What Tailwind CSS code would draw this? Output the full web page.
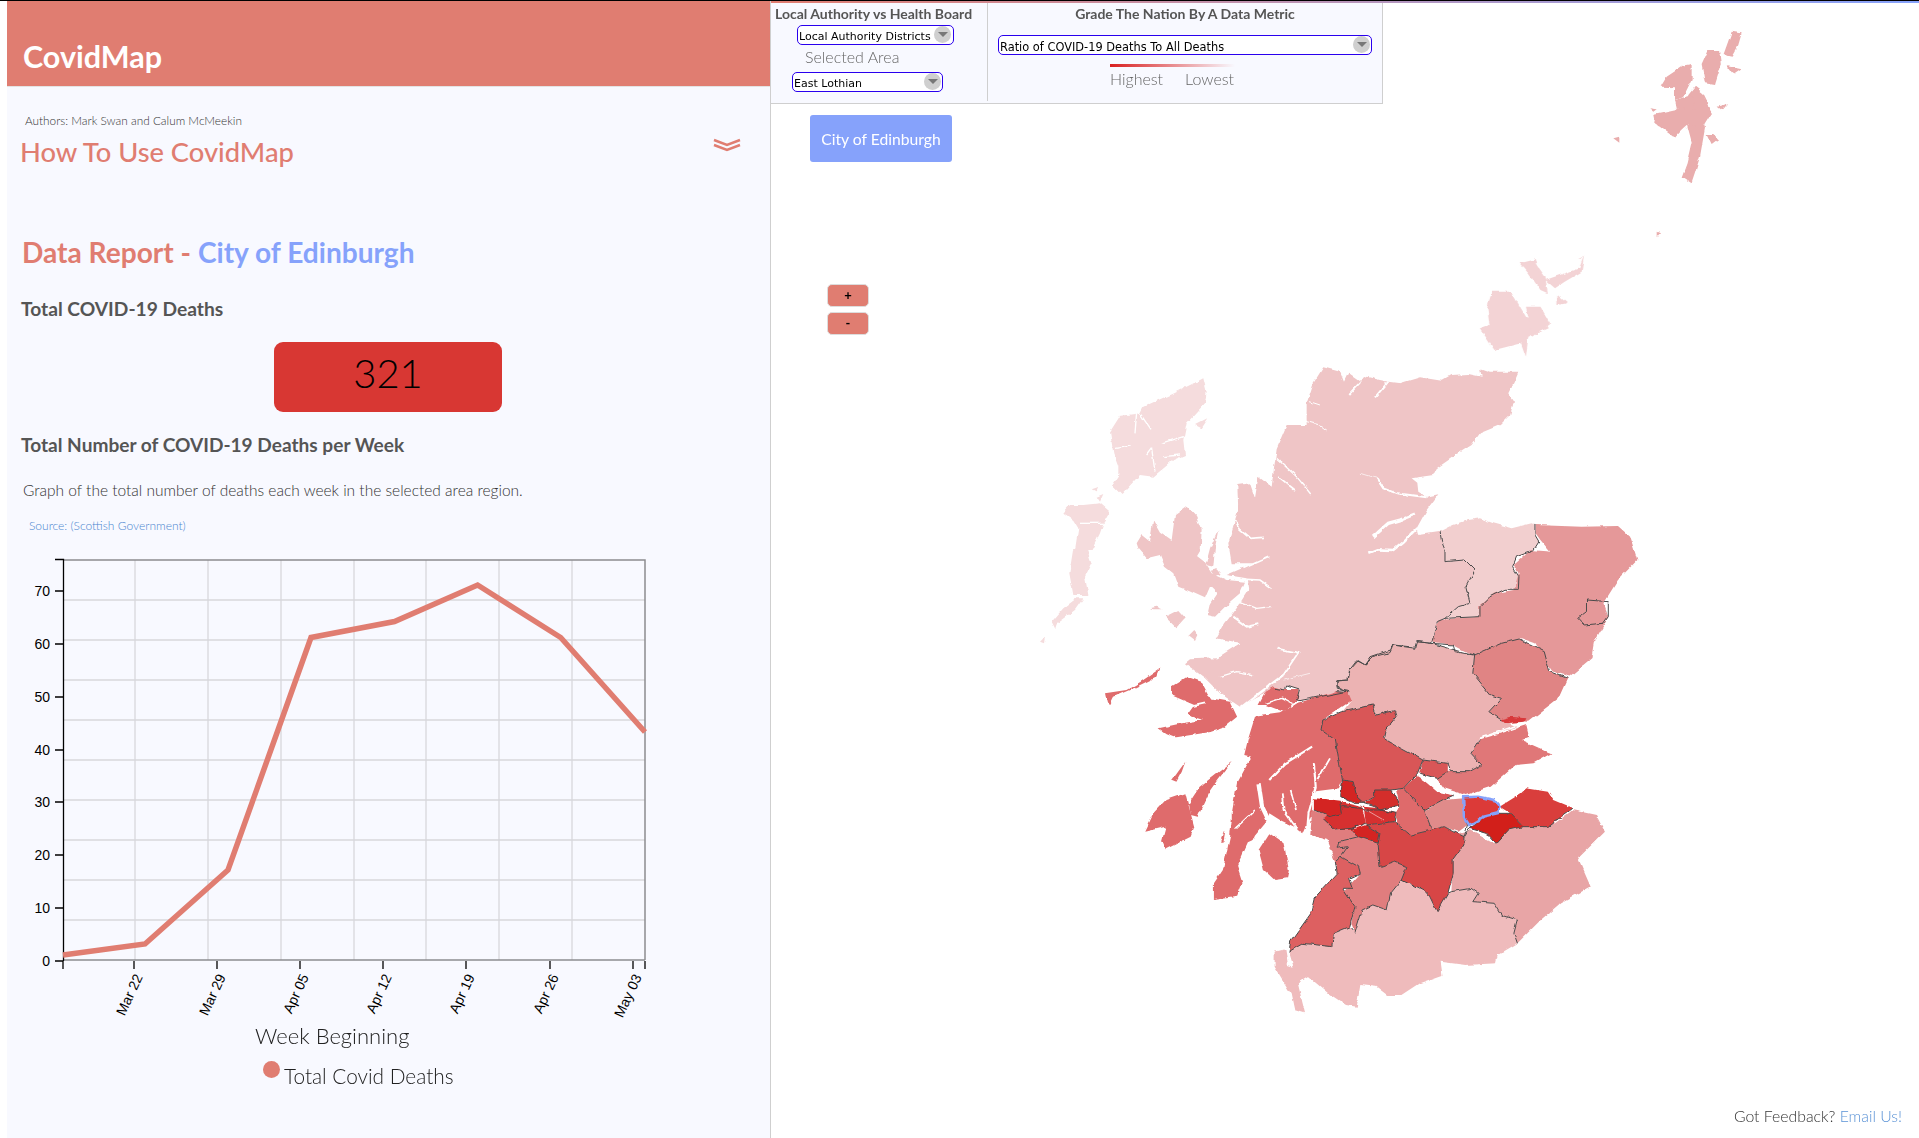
<!DOCTYPE html>
<html lang="en">
<head>
    <meta charset="UTF-8">
    <meta name="viewport" content="width=device-width, initial-scale=1.0">
    <title>CovidMap</title>
    <script src="https://cdn.jsdelivr.net/npm/@tailwindcss/browser@4"></script>
</head>
<body class="relative w-[1919px] h-[1138px] overflow-hidden bg-white font-[Lato,sans-serif]">
    <!-- Map canvas: traced regions, each group is in the coords of a crop -->
    <svg class="absolute inset-0 z-0" width="1919" height="1138" viewBox="0 0 1919 1138">
        <defs>
            <filter id="rough" filterUnits="userSpaceOnUse" x="0" y="0" width="1919" height="1138" color-interpolation-filters="sRGB">
                <feTurbulence type="fractalNoise" baseFrequency="0.11" numOctaves="3" seed="4" result="n"/>
                <feDisplacementMap in="SourceGraphic" in2="n" scale="4" xChannelSelector="R" yChannelSelector="G"/>
            </filter>
        </defs>
        <g filter="url(#rough)">
            <!-- Shetland -->
            <g transform="translate(1560 0) scale(.3333)" fill="#e9adad">
                <polygon points="515,95 545,100 535,135 515,170 490,165"/>
                <polygon points="445,150 480,150 485,190 465,255 435,250 425,195"/>
                <polygon points="500,195 545,205 520,222"/>
                <polygon points="405,260 430,280 440,300 455,340 430,365 435,385 420,470 405,520 395,550 365,530 380,490 395,425 380,370 345,410 280,365 285,345 340,340 370,350 375,320 385,285"/>
                <polygon points="280,345 350,330 380,300 440,300 455,340 430,380 380,375 340,410 285,370"/>
                <polygon points="320,230 365,200 395,195 395,240 370,290 345,300 345,262 302,260"/>
                <polygon points="345,300 395,285 405,330 350,325"/>
                <polygon points="470,320 505,310 485,332"/>
                <polygon points="268,325 290,328 280,335"/>
                <polygon points="160,415 178,410 178,428"/>
                <polygon points="440,405 460,405 475,420 455,435"/>
                <polygon points="290,695 300,700 290,712"/>
                <polygon points="55,778 70,768 62,780" fill="#f5dcdd"/>
            </g>
            <!-- Orkney -->
            <g transform="translate(1000 240) scale(.4847 .3333)" fill="#f3d3d5">
                <polygon points="1015,155 1055,155 1085,230 1125,250 1130,265 1090,290 1085,350 1075,310 1020,330 990,265 1010,255 1005,200"/>
                <polygon points="1085,200 1115,200 1135,250 1100,290"/>
                <polygon points="1072,70 1100,60 1125,110 1130,160 1115,150 1090,100"/>
                <polygon points="1125,120 1165,100 1195,85 1205,45 1200,95 1165,125 1145,145"/>
                <polygon points="1150,165 1170,190 1150,195"/>
                <polygon points="1105,50 1108,70 1100,70"/>
            </g>
            <!-- Western Isles -->
            <g transform="translate(1040 360) scale(.3333)" fill="#f5dcdd">
                <polygon points="490,55 500,95 495,130 440,190 430,240 435,285 400,300 340,350 300,345 285,360 245,405 215,375 235,345 235,320 220,280 210,215 240,168 300,160 310,140 400,100 470,65"/>
                <polygon points="465,195 505,175 485,205"/>
                <polygon points="70,458 90,435 130,435 180,430 210,455 190,490 180,520 155,570 105,570 115,505 100,480"/>
                <polygon points="100,565 140,565 155,610 135,650 145,705 100,705 88,640"/>
                <polygon points="35,785 70,745 110,715 130,715 105,750 50,790 45,805"/>
                <polygon points="0,845 15,830 12,850"/>
                <polygon points="155,385 175,378 170,392"/>
                <polygon points="170,410 190,402 180,425"/>
                <g fill="none" stroke="#fff" stroke-width="4">
                    <polyline points="320,285 335,265 345,335"/>
                    <polyline points="290,155 285,220"/>
                    <polyline points="300,160 330,205"/>
                    <polyline points="225,265 275,258"/>
                    <polyline points="365,250 430,230"/>
                    <polyline points="370,290 420,285"/>
                    <polyline points="120,490 190,490"/>
                </g>
            </g>
            <!-- Highland -->
            <g transform="translate(1140 360) scale(.3333)" fill="#efc5c6">
                <polygon points="550,22 600,35 612,65 625,38 660,62 680,50 720,60 745,65 780,70 840,52 905,62 935,45 985,42 1025,50 1020,25 1050,35 1135,35 1120,70 1105,100 1122,125 1110,165 1080,195 1020,220 995,255 940,290 890,325 880,345 835,352 815,355 832,368 835,395 860,410 895,403 860,450 830,505 835,525 900,515 905,545 915,570 915,605 975,600 1005,630 978,680 990,730 955,740 915,775 892,785 875,850 830,845 825,862 760,855 750,878 700,890 675,915 655,902 630,930 625,960 590,963 592,985 630,992 515,1015 480,1022 470,1020 478,990 440,978 435,990 405,985 300,1040 240,1000 195,955 135,910 150,898 230,895 245,885 300,850 230,835 255,790 290,745 325,690 320,655 260,645 340,610 275,610 265,550 285,480 295,450 292,375 330,370 345,415 355,350 395,380 410,265 440,195 500,195 500,130 520,70"/>
                <g fill="none" stroke="#fff">
                    <polyline stroke-width="5" points="285,480 300,510 330,535 372,532"/>
                    <polyline stroke-width="4" points="410,295 470,350 512,402"/>
                    <polyline stroke-width="5" points="415,350 465,390"/>
                    <polyline stroke-width="3" points="500,185 540,195 562,212"/>
                    <polyline stroke-width="3" points="510,125 540,135"/>
                    <polyline stroke-width="6" points="625,105 660,68"/>
                    <polyline stroke-width="6" points="705,112 745,65"/>
                    <polyline stroke-width="2" points="660,340 710,355"/>
                    <polyline stroke-width="6" points="710,355 730,385 770,400 810,405 860,412"/>
                    <polyline stroke-width="10" points="700,530 745,490 780,480 825,462"/>
                    <polyline stroke-width="8" points="685,578 710,568 760,570 790,545 830,505"/>
                    <polyline stroke-width="5" points="410,866 475,878 430,945"/>
                    <polyline stroke-width="8" points="430,945 300,1045"/>
                    <polyline stroke-width="2" points="510,940 430,960"/>
                    <polyline stroke-width="4" points="340,945 290,935 240,950"/>
                    <polyline stroke-width="4" points="300,725 350,745 395,740"/>
                    <polyline stroke-width="6" points="280,770 320,800 355,793"/>
                    <polyline stroke-width="5" points="320,658 360,660 395,685"/>
                    <polyline stroke-width="6" points="310,625 385,592"/>
                    <polyline stroke-width="3" points="240,845 300,850"/>
                </g>
                <!-- Moray -->
                <polygon fill="#f2cfcf" points="900,515 940,495 985,480 1020,475 1060,490 1115,505 1175,490 1185,495 1185,525 1197,545 1180,572 1130,590 1118,620 1137,650 1135,688 1095,688 1050,710 1020,740 1020,770 940,780 915,775 955,740 990,730 978,680 1005,630 975,600 915,605 915,570 905,545"/>
            </g>
            <!-- Skye and the small isles -->
            <g transform="translate(1040 360) scale(.3333)" fill="#efc5c6">
                <polygon points="290,550 305,525 330,545 340,480 360,515 395,540 405,465 440,440 468,470 485,510 482,570 470,590 495,610 515,640 560,660 615,665 600,700 570,725 525,770 502,765 510,730 530,700 510,680 495,715 440,690 415,680 400,640 375,620 360,585 320,595 295,565"/>
                <polygon points="497,615 510,565 535,510 525,560 520,620"/>
                <polygon points="512,632 530,628 542,642 525,650"/>
                <polygon points="375,770 415,750 437,775 410,805"/>
                <polygon points="445,825 460,810 472,825 465,840"/>
                <polygon points="330,745 350,740 368,748 340,748"/>
            </g>
            <!-- Aberdeenshire -->
            <g transform="translate(1000 240) scale(.4847 .3333)">
                <polygon fill="#e59899" points="1105,855 1200,860 1275,858 1300,890 1315,960 1275,1020 1245,1090 1255,1130 1245,1160 1225,1210 1220,1255 1175,1310 1140,1295 1125,1265 1105,1210 1075,1195 1035,1215 1025,1235 975,1245 935,1215 890,1205 905,1140 990,1130 985,1100 1020,1060 1060,1050 1070,1000 1060,975 1095,930 1135,935 1115,900 1105,880"/>
            </g>
            <!-- Central belt and the south -->
            <g transform="translate(1080 640) scale(.3571 .3333)">
                <!-- Islands and coast of Argyll -->
                <g fill="#df6b6c">
                    <polygon points="608,190 720,152 758,155 762,180 680,240 675,270 715,300 735,420 725,445 650,455 650,520 625,580 600,560 560,540 530,520 525,550 490,600 470,610 440,680 455,730 440,770 375,780 375,730 400,690 420,590 425,540 425,520 440,430 480,350 460,345 470,300 490,230 560,220"/>
                    <polygon points="520,155 545,140 575,150 612,150 610,180 570,215 520,195 500,195"/>
                    <polygon points="255,140 300,110 340,125 365,175 420,185 440,230 400,265 370,275 270,292 240,280 220,265 285,250 345,240 300,225 320,195 255,165"/>
                    <polygon points="70,160 130,150 170,125 225,85 215,110 150,145 95,170 85,192 75,185"/>
                    <polygon points="258,420 295,365 285,395 270,425"/>
                    <polygon points="180,575 205,520 240,480 295,460 320,560 310,590 240,628 230,600 240,560"/>
                    <polygon points="305,490 335,440 425,365 385,420 365,450 330,530 310,525"/>
                    <polygon points="500,630 530,580 570,610 585,690 580,715 545,720 515,690"/>
                    <polygon points="395,605 408,570 402,605"/>
                </g>
                <g fill="none" stroke="#fff">
                    <polyline stroke-width="6" points="650,320 575,370 530,420"/>
                    <polyline stroke-width="12" points="500,430 510,500 530,545 495,590 475,640"/>
                    <polyline stroke-width="6" points="655,370 660,440 640,520 635,585"/>
                    <polyline stroke-width="5" points="700,355 665,420"/>
                    <polyline stroke-width="5" points="565,460 570,510 610,570"/>
                    <polyline stroke-width="5" points="590,450 605,510"/>
                    <polyline stroke-width="5" points="490,510 435,565"/>
                    <polyline stroke-width="5" points="260,190 310,200 350,190"/>
                    <polyline stroke-width="4" points="520,190 565,175 600,195"/>
                </g>
                <polygon fill="#e8a5a6" points="1040,755 1095,745 1115,760 1100,785 1160,790 1180,825 1225,840 1215,880 1225,910 1290,840 1345,790 1430,740 1395,655 1470,575 1445,525 1380,510 1330,550 1240,560 1200,570 1160,610 1090,570 1060,580 1075,615 1045,660"/>
                <polygon fill="#efbbbc" points="585,935 625,910 705,920 710,880 755,860 770,880 790,810 820,795 860,810 870,760 900,720 975,760 1000,815 1030,760 1040,755 1095,745 1115,760 1100,785 1160,790 1180,825 1225,840 1215,880 1225,910 1170,945 1165,970 1080,975 1010,965 1015,1005 950,1030 900,1065 860,1065 830,1040 785,1035 775,1100 745,1095 695,1060 640,1010 610,1030 630,1120 600,1110 590,1060 545,980 545,935 575,928 582,975 598,980 585,935"/>
                <polygon fill="#ecb3b3" points="750,155 720,140 720,122 750,120 755,90 775,62 800,75 815,50 870,30 875,15 940,25 945,5 985,10 1050,30 1105,45 1100,100 1150,165 1180,175 1145,215 1180,240 1225,260 1120,295 1095,340 1125,375 1090,395 1040,395 1030,370 960,360 890,320 850,295 855,270 885,230 880,212 830,225 820,195 735,215 760,180"/>
                <polygon fill="#e08484" points="1105,45 1180,10 1230,-3 1300,35 1315,95 1365,115 1340,175 1255,245 1180,240 1145,215 1180,175 1150,165 1100,100"/>
                <polygon fill="#d8393b" points="1178,238 1205,230 1250,235 1245,245 1190,250"/>
                <polygon fill="#e07778" points="1120,298 1180,280 1250,255 1258,290 1235,300 1320,340 1270,370 1220,375 1150,440 1080,465 1020,445 1000,415 1030,395 1090,395 1125,375 1095,340"/>
                <polygon fill="#d95657" points="680,240 735,215 820,195 830,225 880,212 885,230 855,270 850,295 890,320 960,360 945,400 905,445 870,450 825,450 825,470 795,490 770,470 765,425 735,420 715,300 675,270"/>
                <polygon fill="#d95657" points="960,360 1030,370 1030,395 1000,415 950,400"/>
                <polygon fill="#d95657" points="905,445 945,405 1000,455 1050,465 1020,480 965,512 930,475"/>
                <polygon fill="#df6a6b" points="885,450 905,445 930,475 965,512 985,570 925,585 885,550 885,520 895,495"/>
                <polygon fill="#e08b8a" points="965,515 1020,480 1075,475 1075,515 1085,555 1060,575 1020,560 985,570"/>
                <polygon fill="#e07d7e" points="645,585 650,510 700,530 720,570 760,570 780,590 725,605 720,625 750,620 730,650 715,665 690,600"/>
                <polygon fill="#e07d7e" points="730,650 750,620 720,625 725,605 780,590 835,610 840,680 880,665 915,680 900,720 870,760 860,810 820,795 790,810 770,880 760,850 770,800 735,760 785,700 780,680"/>
                <polygon fill="#dd6061" points="715,665 730,650 780,680 785,700 755,715 765,745 735,745 770,800 755,860 710,880 705,920 625,910 585,935 590,905 650,815 660,770 720,700"/>
                <polygon fill="#d74646" points="800,555 880,545 925,585 1020,560 1075,590 1075,615 1045,660 1045,700 1030,760 1000,815 975,760 900,720 915,680 880,665 840,680 835,610 840,580"/>
                <polygon fill="#d42e2b" points="825,450 870,450 890,480 895,495 840,510 825,500 800,490 825,470"/>
                <polygon fill="#d42422" points="735,420 765,425 775,470 795,490 770,490 730,470"/>
                <polygon fill="#d63030" points="795,500 840,505 885,520 880,545 840,550 800,555"/>
                <polygon fill="#d63030" points="730,485 790,500 800,550 760,570 715,570 680,535"/>
                <polygon fill="#d42422" points="655,475 730,480 735,520 700,530 655,510"/>
                <polygon fill="#d42422" points="760,570 800,555 840,580 835,610 780,590"/>
                <polygon fill="#d21f1a" points="1090,565 1130,530 1170,520 1205,520 1240,560 1200,570 1165,610 1140,580"/>
                <polygon fill="#d93e3c" points="1175,500 1235,460 1250,445 1310,455 1325,480 1380,505 1335,540 1310,560 1240,560 1205,520"/>
                <polygon fill="#dc3a38" points="1073,472 1115,470 1160,480 1175,500 1170,520 1130,530 1090,555 1075,530"/>
                <polyline fill="none" stroke="#fff" stroke-width="7" points="945,405 990,435 1020,455 1075,470"/>
                <polyline fill="none" stroke="#fff" stroke-width="5" points="1120,295 1160,280 1240,250"/>
                <polyline fill="none" stroke="#fff" stroke-width="5" points="655,470 730,480 770,490"/>
                <polyline fill="none" stroke="#fff" stroke-width="1.5" points="770,490 850,540"/>
                <!-- Boundaries -->
                <g fill="none" stroke="#4a4a4a" stroke-width="1">
                    <polyline vector-effect="non-scaling-stroke" points="720,152 750,155 720,140 720,122 750,120 755,90 775,62 800,75 815,50 870,30 875,15 940,25 945,5 985,10 1050,30 1105,45 1180,10 1230,-3 1300,35 1315,95 1365,115"/>
                    <polyline vector-effect="non-scaling-stroke" points="1105,45 1100,100 1150,165 1180,175 1145,215 1180,240"/>
                    <polyline vector-effect="non-scaling-stroke" points="1120,298 1095,340 1125,375 1090,395 1040,395 1030,370 960,360 890,320 850,295 855,270 885,230 880,212 830,225 820,195 735,215 680,240 675,270 715,300 735,420 765,425 775,470 795,490 770,490 730,470 735,420"/>
                    <polyline vector-effect="non-scaling-stroke" points="960,360 945,400 905,445 870,450 825,450 825,470 795,490 825,500 840,510 895,495 890,480 870,450"/>
                    <polyline vector-effect="non-scaling-stroke" points="1030,395 1000,415 950,400"/>
                    <polyline vector-effect="non-scaling-stroke" points="905,445 930,475 965,512 1020,480 1050,465"/>
                    <polyline vector-effect="non-scaling-stroke" points="965,512 985,570 1020,560 1075,590 1085,555 1075,515"/>
                    <polyline vector-effect="non-scaling-stroke" points="655,510 700,530 735,520 730,485"/>
                    <polyline vector-effect="non-scaling-stroke" points="735,500 790,505 795,510 840,510 885,520 880,545 925,585 985,570"/>
                    <polyline vector-effect="non-scaling-stroke" points="800,550 760,565 715,570 680,535"/>
                    <polyline vector-effect="non-scaling-stroke" points="800,555 880,545"/>
                    <polyline vector-effect="non-scaling-stroke" points="760,570 780,590 835,610 840,580 800,555"/>
                    <polyline vector-effect="non-scaling-stroke" points="780,590 725,605 720,625 750,620 730,650 715,665 720,700 660,770 650,815 590,905 585,935 625,910 705,920 710,880 755,860 770,880 790,810 820,795 860,810 870,760 900,720 975,760 1000,815 1030,760 1040,755 1095,745 1115,760 1100,785 1160,790 1180,825 1225,840 1215,880 1225,910"/>
                    <polyline vector-effect="non-scaling-stroke" points="730,650 780,680 785,700 755,715 765,745 735,745 770,800 755,860"/>
                    <polyline vector-effect="non-scaling-stroke" points="835,610 840,680 880,665 915,680 900,720"/>
                    <polyline vector-effect="non-scaling-stroke" points="1075,590 1075,615 1045,660 1045,700 1030,760"/>
                    <polyline vector-effect="non-scaling-stroke" points="1075,590 1090,565 1140,580 1165,610 1200,570 1240,560"/>
                    <polyline vector-effect="non-scaling-stroke" points="1090,565 1130,530 1170,520 1205,520 1240,560 1310,560 1335,540 1380,505"/>
                </g>
                <polygon fill="none" stroke="#86a2fb" stroke-width="2.5" vector-effect="non-scaling-stroke" points="1073,472 1115,470 1160,480 1175,500 1170,520 1130,530 1090,555 1075,530"/>
            </g>
            <!-- Highland and Aberdeenshire boundaries -->
            <g transform="translate(1140 360) scale(.3333)" fill="none" stroke="#4a4a4a" stroke-width="1">
                <polyline vector-effect="non-scaling-stroke" points="900,515 905,545 915,570 915,605 975,600 1005,630 978,680 990,730 955,740 915,775 892,785 875,850 830,845 825,862 760,855 750,878 700,890 675,915 655,902 630,930 625,960 590,963 592,985 630,992 515,1015 480,1022 470,1020 478,990 440,978 435,990 405,985"/>
                <polyline vector-effect="non-scaling-stroke" points="875,850 940,855 945,875 1000,885"/>
                <polyline vector-effect="non-scaling-stroke" points="915,775 1020,770 1020,740 1050,710 1095,688 1135,688 1137,650 1118,620 1130,590 1180,572 1197,545 1185,525 1185,495"/>
            </g>
            <g transform="translate(1000 240) scale(.4847 .3333)" fill="none" stroke="#4a4a4a" stroke-width="1">
                <polygon vector-effect="non-scaling-stroke" points="1210,1080 1255,1085 1255,1130 1245,1150 1205,1155 1192,1135 1210,1115"/>
            </g>
        </g>
    </svg>

    <div class="h-px bg-black"></div>
    <div class="relative z-10 flex h-[1137px]">
        <!-- Sidebar -->
        <aside class="ml-[7px] w-[764px] shrink-0 bg-[#f8f9ff] border-r border-[#cfcfcf] flex flex-col">
            <header class="h-[86px] shrink-0 bg-[#e07d71] border-b border-[#e3e3e3] pl-[16px] pt-[37px]">
                <h1 class="text-[30.5px] leading-[36px] font-bold text-white">CovidMap</h1>
            </header>
            <p class="mt-[26px] pl-[18px] text-[11.8px] leading-[16px] font-light text-[#333]">Authors: Mark Swan and Calum McMeekin</p>
            <div class="mt-[6px] pl-[13px] pr-[29px] flex justify-between">
                <h2 class="text-[27.3px] leading-[34px] font-medium text-[#e07d71]">How To Use CovidMap</h2>
                <svg class="mt-[3px]" width="28" height="14" viewBox="0 0 28 14" fill="none" stroke="#e07d71" stroke-width="2.5"><path d="M1 2l13 5 13-5M1 7l13 5 13-5"/></svg>
            </div>
            <h2 class="mt-[65px] pl-[15px] text-[28.1px] leading-[36px] font-bold text-[#e07d71]">Data Report - <span class="text-[#86a2fb]">City of Edinburgh</span></h2>
            <h3 class="mt-[27px] pl-[14px] text-[19.2px] leading-[24px] font-bold text-[#555]">Total COVID-19 Deaths</h3>
            <div class="mt-[21px] ml-[267px] w-[228px] h-[70px] pb-[9px] rounded-[9px] bg-[#d83733] flex items-center justify-center text-[40px] font-light text-black">321</div>
            <h3 class="mt-[21px] pl-[14px] text-[19.1px] leading-[24px] font-bold text-[#555]">Total Number of COVID-19 Deaths per Week</h3>
            <p class="mt-[23px] pl-[16px] text-[15.5px] leading-[20px] font-light text-[#333]">Graph of the total number of deaths each week in the selected area region.</p>
            <p class="mt-[18px] pl-[22px] text-[12px] leading-[16px] font-light text-[#4a86d0]">Source: (Scottish Government)</p>
            <!-- Chart -->
            <svg class="mt-[6px] shrink-0 font-['Liberation_Sans',sans-serif]" width="763" height="482" viewBox="7 540 763 482">
                <g stroke="#d8d8dc" stroke-width="1.3" fill="none">
                    <path d="M63 600H645M63 640H645M63 680H645M63 720H645M63 760H645M63 800H645M63 840H645M63 880H645M63 920H645"/>
                    <path d="M135 560V960M208 560V960M281 560V960M354 560V960M426 560V960M499 560V960M572 560V960"/>
                </g>
                <path d="M63 560H645V960" fill="none" stroke="#8c8c90" stroke-width="1.5"/>
                <path d="M63 960H645" fill="none" stroke="#8c8c90" stroke-width="1.5"/>
                <path d="M55 559.5H63.5V961M55 591H63M55 644H63M55 697H63M55 750H63M55 802H63M55 855H63M55 908H63M55 961H63" fill="none" stroke="#000" stroke-width="1.3"/>
                <path d="M63 961V969M134 961V969M217 961V969M300 961V969M383 961V969M466 961V969M550 961V969M633 961V969M645 961V969" fill="none" stroke="#000" stroke-width="1.3"/>
                <g font-size="14" fill="#000" text-anchor="end">
                    <text x="50" y="596">70</text>
                    <text x="50" y="649">60</text>
                    <text x="50" y="702">50</text>
                    <text x="50" y="755">40</text>
                    <text x="50" y="807">30</text>
                    <text x="50" y="860">20</text>
                    <text x="50" y="913">10</text>
                    <text x="50" y="966">0</text>
                    <text transform="translate(143 977) rotate(-65)">Mar 22</text>
                    <text transform="translate(226 977) rotate(-65)">Mar 29</text>
                    <text transform="translate(309 977) rotate(-65)">Apr 05</text>
                    <text transform="translate(392 977) rotate(-65)">Apr 12</text>
                    <text transform="translate(475 977) rotate(-65)">Apr 19</text>
                    <text transform="translate(559 977) rotate(-65)">Apr 26</text>
                    <text transform="translate(642 977) rotate(-65)">May 03</text>
                </g>
                <polyline fill="none" stroke="#e07d71" stroke-width="5.5" points="63,955 145,944 228,870 311,637.5 394.5,621.5 477.6,585 560.7,637.5 645,732"/>
            </svg>
            <p class="ml-[248px] text-[22px] leading-[28px] font-light text-[#222]">Week Beginning</p>
            <div class="mt-[12px] ml-[256px] flex items-start gap-[4px]">
                <span class="block mt-[-1px] w-[17px] h-[17px] rounded-full bg-[#e07d71]"></span>
                <span class="text-[20.8px] leading-[28px] font-light text-[#222]">Total Covid Deaths</span>
            </div>
        </aside>

        <!-- Map side -->
        <main class="flex-1 flex flex-col">
            <div class="h-[2px] bg-gradient-to-r from-[#e07d71] to-[#86a2fb]"></div>
            <div class="w-[612px] h-[101px] bg-[#f8f9ff] border-b border-r border-[#cfcfcf] flex">
                <div class="w-[217px] shrink-0 border-r border-[#cfcfcf] mb-[2px]">
                    <h4 class="mt-[2px] pl-[4px] text-[14px] leading-[18px] font-bold text-[#555] whitespace-nowrap">Local Authority vs Health Board</h4>
                    <div class="relative mt-[2px] ml-[26px] w-[157px] h-[20px]">
                        <select class="block appearance-none w-full h-full pl-[1px] pt-[3px] bg-white border border-[#2a00ee] rounded-[5px] font-['DejaVu_Sans',sans-serif] text-[11px] text-black"><option>Local Authority Districts</option></select>
                        <span class="absolute right-[3px] top-[1px] w-[17px] h-[17px] rounded-full bg-[#cfcfcf] flex items-center justify-center"><span class="block border-x-[5px] border-x-transparent border-t-[5px] border-t-[#777]"></span></span>
                    </div>
                    <p class="mt-[2px] ml-[34px] text-[16px] leading-[20px] font-light text-[#666]">Selected Area</p>
                    <div class="relative mt-[5px] ml-[21px] w-[151px] h-[20px]">
                        <select class="block appearance-none w-full h-full pl-[1px] pt-[3px] bg-white border border-[#2a00ee] rounded-[5px] font-['DejaVu_Sans',sans-serif] text-[11px] text-black"><option>East Lothian</option></select>
                        <span class="absolute right-[2px] top-[1px] w-[17px] h-[17px] rounded-full bg-[#cfcfcf] flex items-center justify-center"><span class="block border-x-[5px] border-x-transparent border-t-[5px] border-t-[#777]"></span></span>
                    </div>
                </div>
                <div class="flex-1">
                    <h4 class="mt-[2px] text-center text-[14px] leading-[18px] font-bold text-[#555]">Grade The Nation By A Data Metric</h4>
                    <div class="relative mt-[12px] ml-[10px] w-[374px] h-[20px]">
                        <select class="block appearance-none w-full h-full pl-[1px] pt-[3px] bg-white border border-[#2a00ee] rounded-[5px] font-['DejaVu_Sans',sans-serif] text-[11.4px] text-black"><option>Ratio of COVID-19 Deaths To All Deaths</option></select>
                        <span class="absolute right-[2px] top-[1px] w-[17px] h-[17px] rounded-full bg-[#cfcfcf] flex items-center justify-center"><span class="block border-x-[5px] border-x-transparent border-t-[5px] border-t-[#777]"></span></span>
                    </div>
                    <div class="mt-[9px] ml-[122px] w-[125px] h-[3px] bg-gradient-to-r from-[#d92020] to-transparent"></div>
                    <div class="mt-[2px] ml-[122px] flex gap-[22px] text-[16px] leading-[20px] font-light text-[#666]">
                        <span>Highest</span>
                        <span>Lowest</span>
                    </div>
                </div>
            </div>
            <button class="mt-[11px] ml-[39px] w-[142px] h-[47px] pt-[2px] rounded-[3px] bg-[#86a2fb] text-white text-[15.7px]">City of Edinburgh</button>
            <button class="mt-[122px] ml-[56px] w-[42px] h-[23px] rounded-[5px] bg-[#e07d71] border border-[#ddd] text-black text-[13px] font-bold leading-none">+</button>
            <button class="mt-[5px] ml-[56px] w-[42px] h-[23px] rounded-[5px] bg-[#e07d71] border border-[#ddd] text-black text-[13px] font-bold leading-none">-</button>
        </main>
    </div>
    <p class="absolute z-10 right-[17px] bottom-[12px] text-[15.8px] leading-[20px] font-light text-[#333]">Got Feedback? <a class="text-[#5b93d6]" href="#">Email Us!</a></p>
</body>
</html>
